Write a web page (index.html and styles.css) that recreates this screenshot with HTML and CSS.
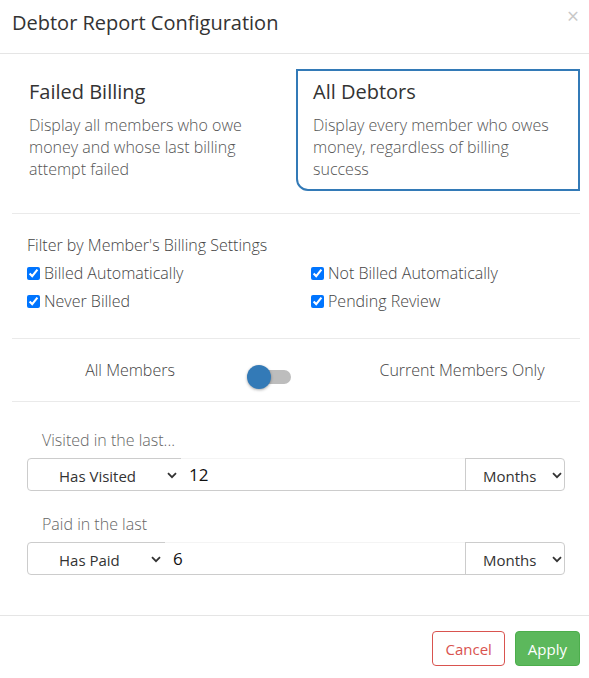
FILE: index.html
```html
<!DOCTYPE html>
<html lang="en">
<head>
    <meta charset="UTF-8">
    <meta name="viewport" content="width=device-width, initial-scale=1.0">
    <title>Debtor Report Configuration</title>
    <link rel="stylesheet" href="styles.css">
</head>
<body>
    <div class="modal">
        <div class="modal-header">
            <h4 class="modal-title">Debtor Report Configuration</h4>
            <span class="close">&times;</span>
        </div>

        <div class="modal-body">
            <div class="report-types">
                <div class="report-card">
                    <div class="card-title">Failed Billing</div>
                    <div class="card-desc">Display all members who owe money and whose last billing attempt failed</div>
                </div>
                <div class="report-card active">
                    <div class="card-title">All Debtors</div>
                    <div class="card-desc">Display every member who owes money, regardless of billing success</div>
                </div>
            </div>

            <hr class="divider filter-divider">

            <div class="filter">
                <div class="filter-title">Filter by Member's Billing Settings</div>
                <div class="checkbox-grid">
                    <label><input type="checkbox" checked> Billed Automatically</label>
                    <label><input type="checkbox" checked> Not Billed Automatically</label>
                    <label><input type="checkbox" checked> Never Billed</label>
                    <label><input type="checkbox" checked> Pending Review</label>
                </div>
            </div>

            <hr class="divider toggle-divider">

            <div class="member-toggle">
                <span class="toggle-label">All Members</span>
                <div class="toggle-cell">
                    <div class="toggle">
                        <span class="toggle-knob"></span>
                    </div>
                </div>
                <span class="toggle-label">Current Members Only</span>
            </div>

            <hr class="divider">

            <div class="dates">
                <div class="date-label">Visited in the last...</div>
                <div class="input-group">
                    <div class="select select-visited">
                        <span>Has Visited</span>
                        <svg class="chevron" width="10" height="7" viewBox="0 0 10 7"><path d="M1 1.2l4 4 4-4" fill="none" stroke="#333" stroke-width="1.8"/></svg>
                    </div>
                    <input class="number" type="text" value="12">
                    <div class="select select-unit">
                        <span>Months</span>
                        <svg class="chevron" width="10" height="7" viewBox="0 0 10 7"><path d="M1 1.2l4 4 4-4" fill="none" stroke="#333" stroke-width="1.8"/></svg>
                    </div>
                </div>

                <div class="date-label paid-label">Paid in the last</div>
                <div class="input-group">
                    <div class="select select-paid">
                        <span>Has Paid</span>
                        <svg class="chevron" width="10" height="7" viewBox="0 0 10 7"><path d="M1 1.2l4 4 4-4" fill="none" stroke="#333" stroke-width="1.8"/></svg>
                    </div>
                    <input class="number" type="text" value="6">
                    <div class="select select-unit">
                        <span>Months</span>
                        <svg class="chevron" width="10" height="7" viewBox="0 0 10 7"><path d="M1 1.2l4 4 4-4" fill="none" stroke="#333" stroke-width="1.8"/></svg>
                    </div>
                </div>
            </div>
        </div>

        <div class="modal-footer">
            <button class="btn btn-cancel">Cancel</button>
            <button class="btn btn-apply">Apply</button>
        </div>
    </div>
</body>
</html>
```

FILE: styles.css
```css
body {
    margin: 0;
    background-color: white;
    color: #333;
    font-family: "Open Sans", "Liberation Sans", sans-serif;
}
.modal {
    position: relative;
    width: 589px;
    height: 678px;
}
.modal-header {
    padding: 8px 12px 15px;
    border-bottom: 1px solid #e5e5e5;
}
.modal-title {
    margin: 0;
    font-size: 20px;
    font-weight: 400;
    line-height: 30px;
    color: #333;
}
.close {
    position: absolute;
    top: 4px;
    right: 10px;
    font-size: 21px;
    line-height: 24px;
    color: #c8c8c8;
}
.modal-body {
    padding: 15px 9px 0 12px;
}
.report-types {
    display: grid;
    grid-template-columns: 1fr 1fr;
}
.report-card {
    border: 2px solid transparent;
    padding: 8px 15px 9px;
}
.report-card.active {
    border-color: #337ab7;
    border-radius: 0 0 0 12px;
}
.card-title {
    font-size: 20px;
    line-height: 26px;
    color: #333;
    margin-bottom: 9px;
}
.card-desc {
    font-size: 16px;
    font-weight: 300;
    line-height: 22px;
    color: #555;
}
.divider {
    border: 0;
    border-top: 1px solid #eaeaea;
    margin: 0;
}
.filter-divider {
    margin-top: 22px;
}
.filter {
    padding: 20px 13px 0 15px;
    font-size: 16px;
    font-weight: 300;
    color: #444;
}
.filter-title {
    line-height: 22px;
}
.checkbox-grid {
    display: grid;
    grid-template-columns: 284px 1fr;
    margin-top: 3px;
}
.checkbox-grid label {
    display: flex;
    align-items: center;
    height: 28px;
    gap: 4px;
}
.checkbox-grid input {
    margin: 0;
    width: 13px;
    height: 13px;
}
.toggle-divider {
    margin-top: 23px;
}
.member-toggle {
    display: grid;
    grid-template-columns: 236px 96px 236px;
    align-items: center;
    height: 62px;
    font-size: 16px;
    font-weight: 300;
    color: #444;
}
.toggle-label {
    text-align: center;
}
.toggle-cell {
    display: flex;
    align-items: center;
    padding-top: 14px;
}
.toggle {
    position: relative;
    width: 41px;
    height: 14px;
    margin-left: 2px;
    border-radius: 7px;
    background-color: #bdbdbd;
}
.toggle-knob {
    position: absolute;
    left: -3px;
    top: -5px;
    width: 24px;
    height: 24px;
    border-radius: 50%;
    background-color: #337ab7;
    box-shadow: 0 1px 3px rgba(0, 0, 0, 0.35);
}
.dates {
    padding: 27px 15px 0;
}
.date-label {
    padding-left: 15px;
    font-size: 16px;
    font-weight: 300;
    line-height: 22px;
    color: #666;
    margin-bottom: 7px;
}
.paid-label {
    margin-top: 22px;
}
.input-group {
    display: flex;
    height: 31px;
    border: 1px solid #ccc;
    border-radius: 4px;
}
.select {
    display: flex;
    align-items: center;
    justify-content: space-between;
    font-size: 15px;
    color: #333;
    box-sizing: border-box;
}
.select-visited {
    width: 153px;
    padding: 2px 4px 0 31px;
}
.select-paid {
    width: 137px;
    padding: 2px 4px 0 31px;
}
.select-unit {
    width: 99px;
    padding: 2px 2px 0 17px;
    border-left: 1px solid #ccc;
}
.number {
    flex: 1;
    min-width: 0;
    border: 0;
    border-top: 1px solid #f4f4f4;
    margin-top: -1px;
    padding: 0 8px;
    font-family: "Open Sans", "Liberation Sans", sans-serif;
    font-size: 17px;
    color: #111;
    outline: none;
}
.modal-footer {
    position: absolute;
    left: 0;
    right: 0;
    top: 615px;
    display: flex;
    justify-content: flex-end;
    gap: 10px;
    padding: 15px 9px 0 12px;
    border-top: 1px solid #e5e5e5;
}
.btn {
    height: 35px;
    padding: 0 12px;
    border-radius: 4px;
    font-family: "Open Sans", "Liberation Sans", sans-serif;
    font-size: 15px;
}
.btn-cancel {
    background-color: white;
    border: 1px solid #d9534f;
    color: #d9534f;
}
.btn-apply {
    background-color: #5cb85c;
    border: 1px solid #4cae4c;
    color: white;
}
```
